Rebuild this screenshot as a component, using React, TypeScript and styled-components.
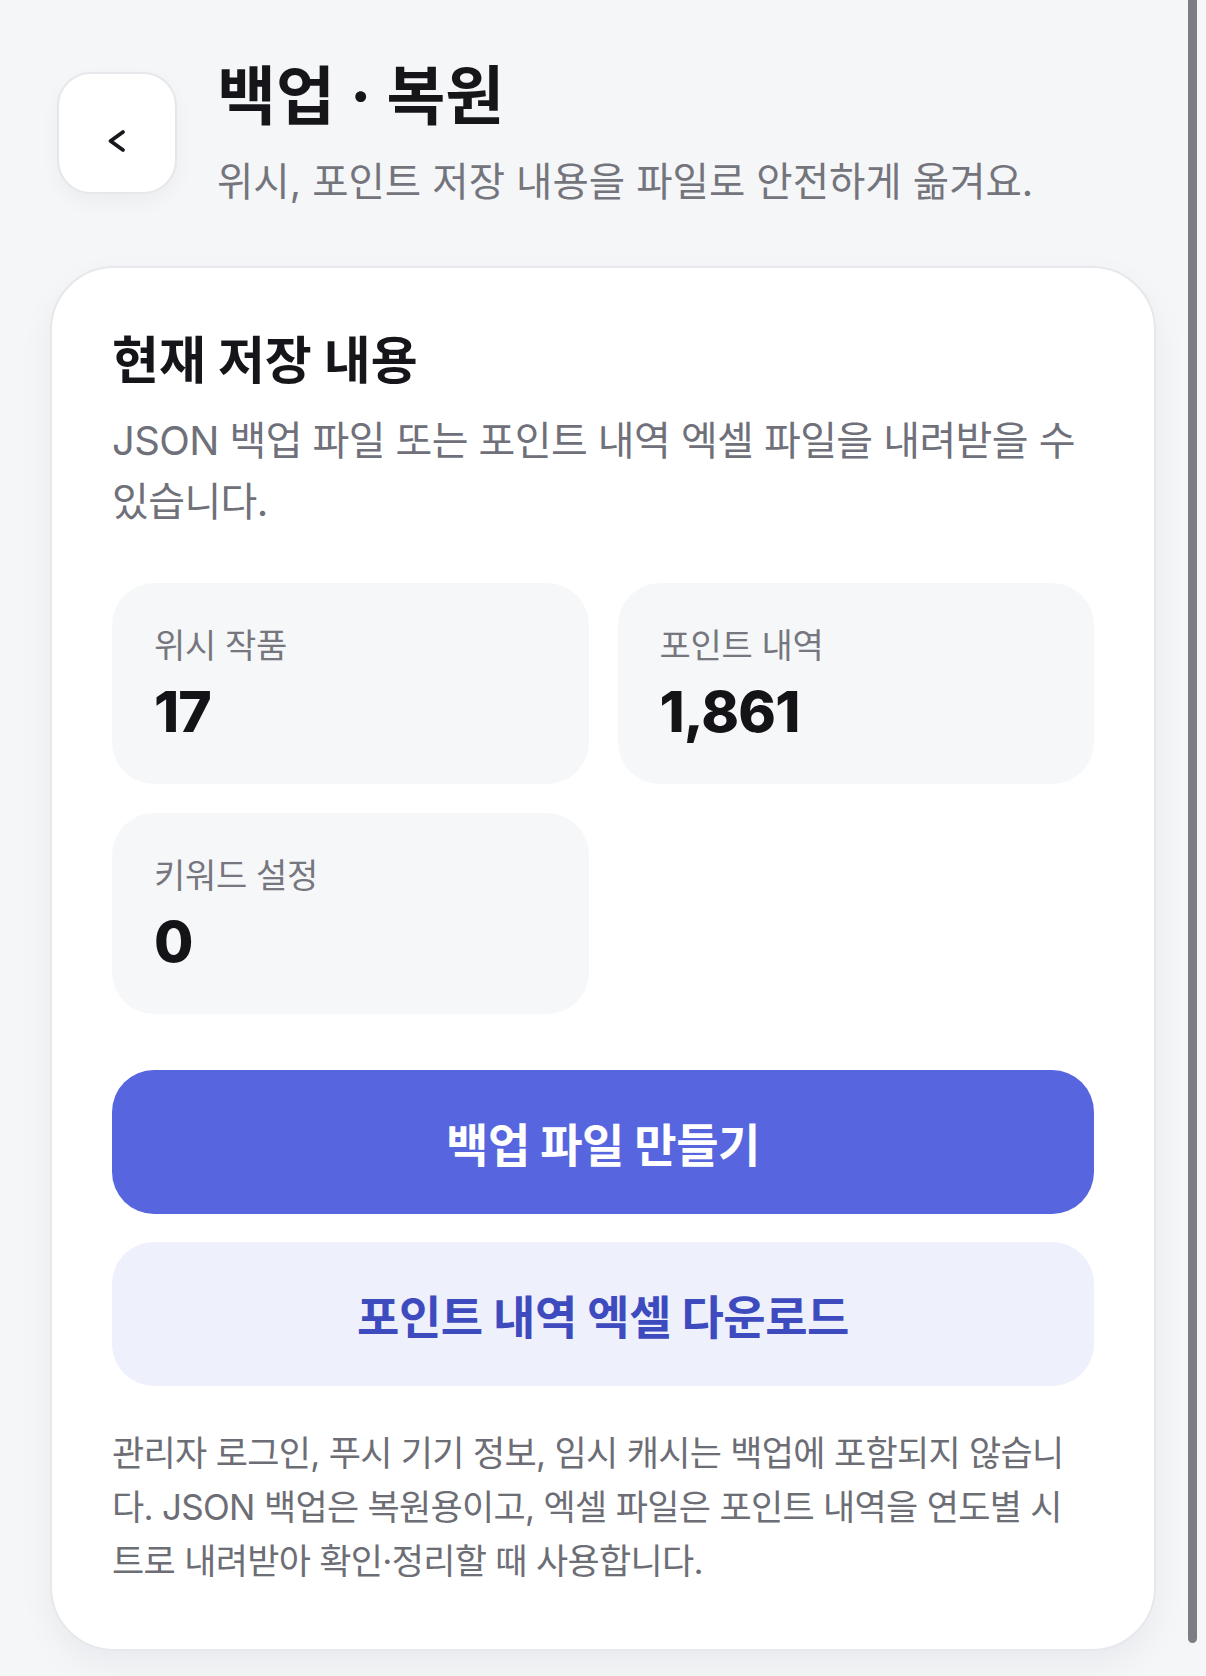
import React from 'react';
import styled, { createGlobalStyle } from 'styled-components';

const GlobalStyle = createGlobalStyle`
  * {
    box-sizing: border-box;
  }

  html,
  body {
    margin: 0;
    padding: 0;
    background: #f5f6f8;
    overflow: hidden;
  }

  body {
    font-family: 'Inter', 'Noto Sans CJK KR', sans-serif;
    color: #16161a;
    -webkit-font-smoothing: antialiased;
  }
`;

const Page = styled.div`
  min-height: 1676px;
  padding: 57px 50px 28px;
`;

const Header = styled.header`
  display: flex;
  align-items: center;
  gap: 40px;
  padding: 0 7px;
`;

const BackButton = styled.button`
  display: flex;
  flex-shrink: 0;
  align-items: center;
  justify-content: center;
  width: 120px;
  height: 122px;
  padding: 16px 0 0;
  border: 2px solid #e6e7ea;
  border-radius: 34px;
  background: #ffffff;
  box-shadow: 0 8px 20px rgba(20, 22, 30, 0.04);
  color: #18181c;
  cursor: pointer;
`;

const HeaderText = styled.div`
  display: flex;
  flex-direction: column;
  gap: 21px;
`;

const Title = styled.h1`
  margin: 0;
  font-size: 64px;
  line-height: 78px;
  font-weight: 700;
  color: #16161a;
`;

const Subtitle = styled.p`
  margin: 0;
  font-size: 39.5px;
  line-height: 52px;
  font-weight: 400;
  color: #74757c;
`;

const Card = styled.section`
  margin-top: 58px;
  padding: 62px 60px 61px;
  border: 2px solid #e7e8eb;
  border-radius: 64px;
  background: #ffffff;
  box-shadow: 0 14px 34px rgba(20, 22, 30, 0.05);
`;

const CardTitle = styled.h2`
  margin: 0;
  font-size: 51px;
  line-height: 61px;
  font-weight: 700;
  color: #16161a;
`;

const CardDesc = styled.p`
  margin: 19px 0 0;
  font-size: 40px;
  line-height: 61px;
  letter-spacing: -0.015em;
  color: #6f7079;
`;

const StatGrid = styled.div`
  display: grid;
  grid-template-columns: 1fr 1fr;
  gap: 29px;
  margin-top: 51px;
`;

const StatBox = styled.div`
  display: flex;
  flex-direction: column;
  gap: 10px;
  padding: 40px 42px;
  border-radius: 42px;
  background: #f6f7f9;
`;

const StatLabel = styled.span`
  font-size: 34px;
  line-height: 46px;
  letter-spacing: -0.01em;
  color: #76777e;
`;

const StatValue = styled.strong`
  font-size: 57px;
  line-height: 65px;
  font-weight: 800;
  letter-spacing: -0.015em;
  color: #141418;
`;

const Actions = styled.div`
  display: flex;
  flex-direction: column;
  gap: 28px;
  margin-top: 56px;
`;

const ActionButton = styled.button<{ $primary?: boolean }>`
  width: 100%;
  height: 144px;
  border: none;
  border-radius: 42px;
  font-family: inherit;
  font-size: 46px;
  font-weight: 700;
  letter-spacing: -0.01em;
  cursor: pointer;
  background: ${(props) => (props.$primary ? '#5766de' : '#eef0fc')};
  color: ${(props) => (props.$primary ? '#ffffff' : '#3d4bbf')};
`;

const Note = styled.p`
  margin: 40px 0 0;
  max-width: 965px;
  font-size: 35px;
  line-height: 54px;
  letter-spacing: -0.02em;
  color: #6c6d75;
`;

const ScrollThumb = styled.div`
  position: fixed;
  top: 0;
  right: 9px;
  width: 9px;
  height: 1643px;
  border-radius: 0 0 5px 5px;
  background: #7d7e83;
`;

const stats = [
  { label: '위시 작품', value: '17' },
  { label: '포인트 내역', value: '1,861' },
  { label: '키워드 설정', value: '0' },
];

const ChevronLeft = () => (
  <svg width="22" height="26" viewBox="0 0 22 26" fill="none">
    <path
      d="M17 4 L4.5 13 L17 22"
      stroke="currentColor"
      strokeWidth="3.8"
      strokeLinecap="round"
      strokeLinejoin="round"
    />
  </svg>
);

const App = () => {
  return (
    <>
      <GlobalStyle />
      <Page>
        <Header>
          <BackButton aria-label="뒤로">
            <ChevronLeft />
          </BackButton>
          <HeaderText>
            <Title>백업 · 복원</Title>
            <Subtitle>위시, 포인트 저장 내용을 파일로 안전하게 옮겨요.</Subtitle>
          </HeaderText>
        </Header>

        <Card>
          <CardTitle>현재 저장 내용</CardTitle>
          <CardDesc>
            JSON 백업 파일 또는 포인트 내역 엑셀 파일을 내려받을 수 있습니다.
          </CardDesc>

          <StatGrid>
            {stats.map((stat) => (
              <StatBox key={stat.label}>
                <StatLabel>{stat.label}</StatLabel>
                <StatValue>{stat.value}</StatValue>
              </StatBox>
            ))}
          </StatGrid>

          <Actions>
            <ActionButton $primary>백업 파일 만들기</ActionButton>
            <ActionButton>포인트 내역 엑셀 다운로드</ActionButton>
          </Actions>

          <Note>
            관리자 로그인, 푸시 기기 정보, 임시 캐시는 백업에 포함되지 않습니다. JSON 백업은
            복원용이고, 엑셀 파일은 포인트 내역을 연도별 시트로 내려받아 확인·정리할 때
            사용합니다.
          </Note>
        </Card>
      </Page>
      <ScrollThumb />
    </>
  );
};

export default App;
